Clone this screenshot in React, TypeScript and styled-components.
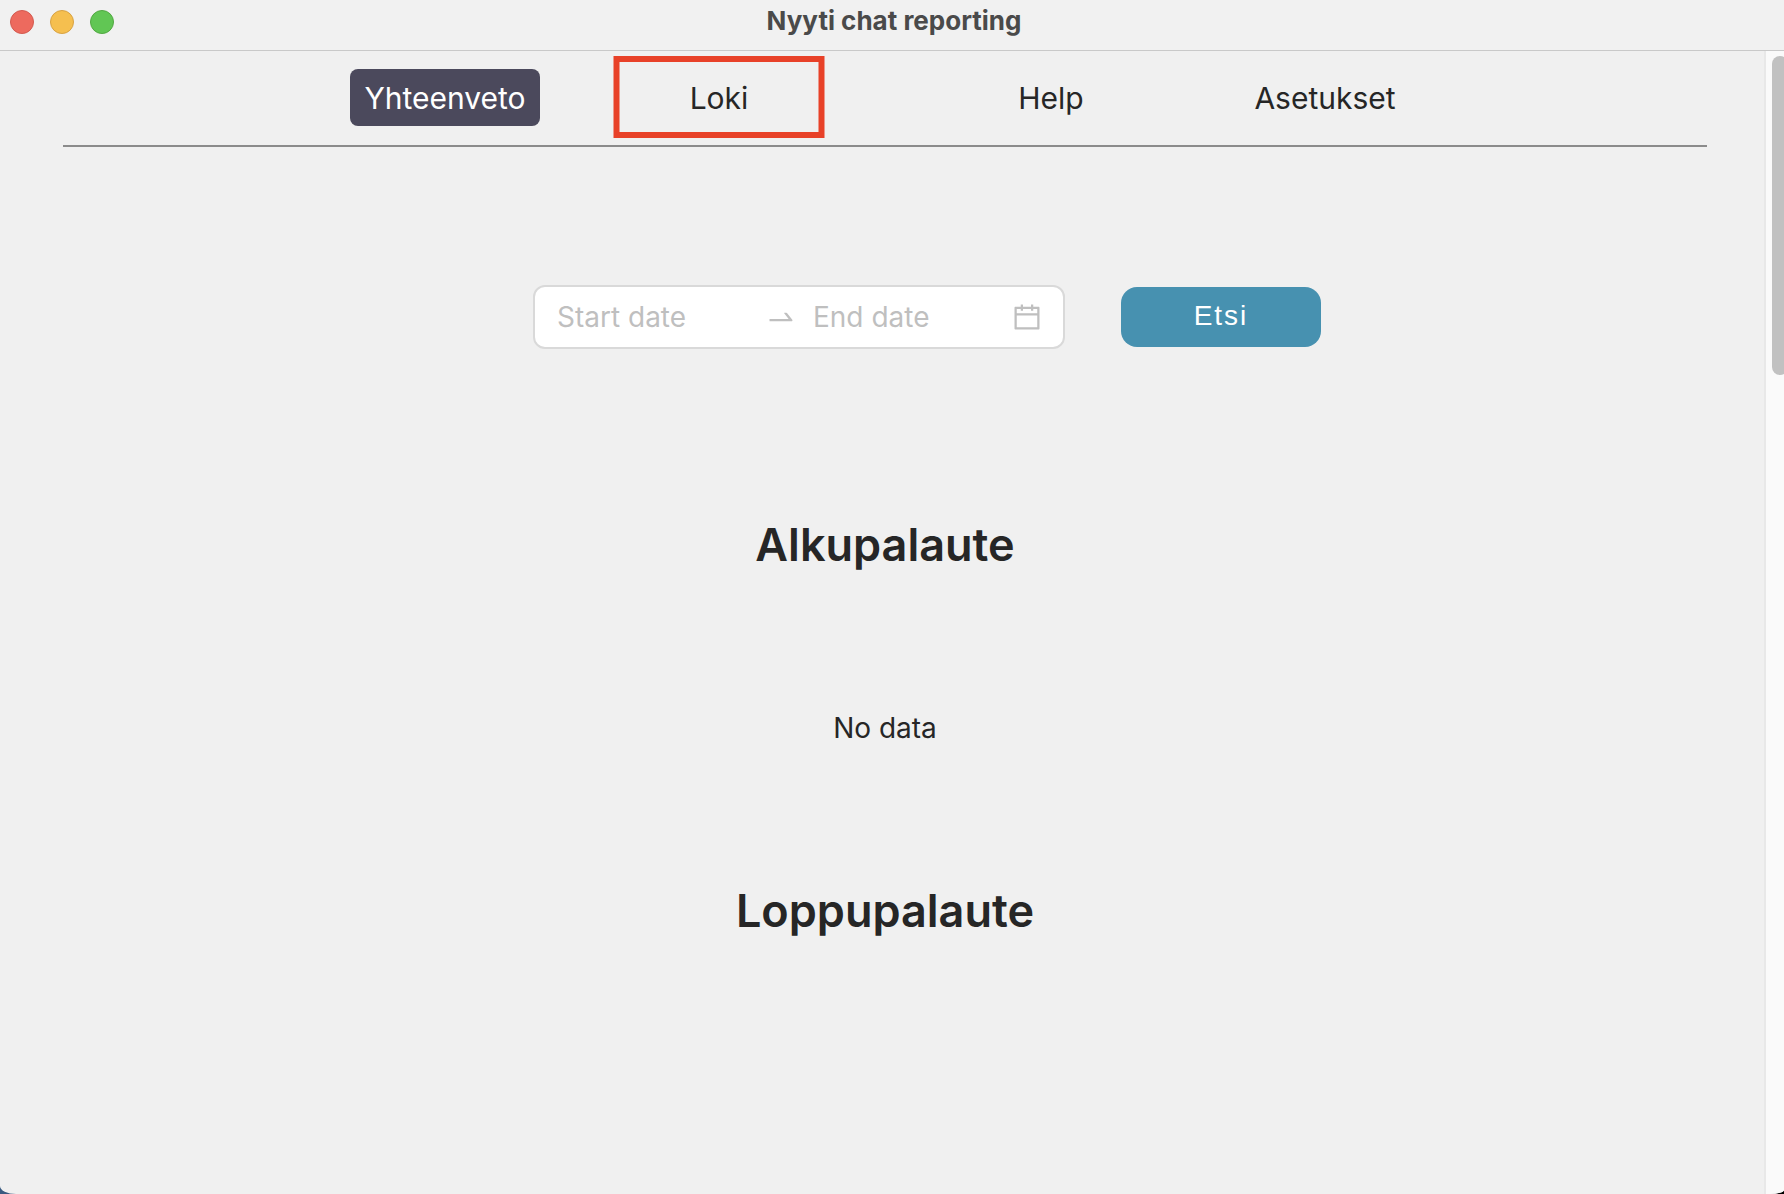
import React from "react";
import styled, { createGlobalStyle } from "styled-components";

const GlobalStyle = createGlobalStyle`
  *, *::before, *::after { box-sizing: border-box; }
  body {
    margin: 0;
    background: linear-gradient(90deg, #3a5a80 50%, #000 50%);
    font-family: Inter, "Liberation Sans", sans-serif;
    color: #262626;
  }
`;

const Window = styled.div`
  display: flex;
  flex-direction: column;
  min-height: 100vh;
  overflow: hidden;
  background: #f0f0f0;
  border-radius: 0 0 14px 16px / 0 0 4px 8px;
`;

const TitleBar = styled.header`
  display: grid;
  grid-template-columns: 1fr auto 1fr;
  align-items: center;
  height: 51px;
  padding: 0 6px 6px 10px;
  background: #f1f1f1;
  border-bottom: 1px solid #c9c9c9;
`;

const WindowControls = styled.div`
  display: flex;
  gap: 16px;
`;

const Light = styled.button<{ $fill: string; $edge: string }>`
  width: 24px;
  height: 24px;
  padding: 0;
  border: 1px solid ${(p) => p.$edge};
  border-radius: 50%;
  background: ${(p) => p.$fill};
`;

const Title = styled.span`
  padding-bottom: 2px;
  font-size: 26px;
  font-weight: 700;
  line-height: 32px;
  color: #4a4a4a;
`;

const Viewport = styled.div`
  display: flex;
  flex: 1;
`;

const Page = styled.div`
  flex: 1;
  min-width: 0;
  padding: 0 57px 0 63px;
`;

const Nav = styled.nav`
  display: flex;
  justify-content: center;
  gap: 58px;
  height: 96px;
  padding-top: 18px;
  border-bottom: 2px solid #8b8b8b;
`;

const NavGroup = styled.div`
  display: grid;
  grid-template-columns: 1fr 1fr;
  flex: 0 0 calc(100% / 3);
  justify-items: center;
  align-items: start;
`;

const NavLink = styled.a<{ $active?: boolean; $marked?: boolean }>`
  position: relative;
  height: 57px;
  padding: 1px 14px 0;
  border-radius: 8px;
  font-size: 30px;
  line-height: 56px;
  text-decoration: none;
  color: ${(p) => (p.$active ? "#fff" : "#262626")};
  background: ${(p) => (p.$active ? "#4b495c" : "transparent")};

  ${(p) =>
    p.$marked &&
    `&::after {
      content: "";
      position: absolute;
      top: -13px;
      left: 50%;
      width: 211px;
      height: 82px;
      transform: translateX(-50%);
      border: 6px solid #e84128;
    }`}
`;

const Search = styled.form`
  display: flex;
  justify-content: center;
  align-items: center;
  gap: 56px;
  margin: 138px 0 33px;
  padding-left: 84px;
`;

const RangePicker = styled.div`
  display: flex;
  align-items: center;
  width: 532px;
  height: 64px;
  padding: 0 20px 0 22px;
  border: 2px solid #d9d9d9;
  border-radius: 12px;
  background: #fff;
`;

const DateInput = styled.input`
  flex: 1;
  min-width: 0;
  padding: 0;
  border: 0;
  outline: 0;
  background: transparent;
  font: 28px/36px Inter, "Liberation Sans", sans-serif;
  color: #262626;

  &::placeholder {
    color: #bfbfbf;
    opacity: 1;
  }
`;

const Icon = styled.svg<{ $gap: number }>`
  flex: none;
  width: 32px;
  height: 32px;
  margin-left: ${(p) => p.$gap}px;
  fill: #bfbfbf;

  & + input {
    margin-left: 16px;
  }
`;

const SearchButton = styled.button`
  width: 200px;
  height: 60px;
  padding: 0 0 2px;
  border: 0;
  border-radius: 16px;
  background: #4791b0;
  color: #fff;
  font: 28px/32px "Liberation Sans", sans-serif;
  letter-spacing: 2px;
`;

const Section = styled.section`
  text-align: center;
`;

const Heading = styled.h1`
  margin: 0;
  padding-top: 131px;
  font-size: 45px;
  font-weight: 600;
  line-height: 64px;
`;

const Empty = styled.p`
  margin: 0;
  padding-top: 131px;
  font-size: 28px;
  line-height: 40px;
`;

const ScrollTrack = styled.div`
  flex: none;
  width: 20px;
  padding: 5px 0 0 6px;
  overflow: hidden;
  border-left: 2px solid #e8e8e8;
  background: #fafafa;
`;

const ScrollThumb = styled.div`
  width: 16px;
  height: 319px;
  border-radius: 8px;
  background: #c1c1c1;
`;

const lights = [
  { label: "Close", fill: "#ed6a5e", edge: "#d35a4f" },
  { label: "Minimize", fill: "#f5bf4f", edge: "#d8a243" },
  { label: "Zoom", fill: "#61c654", edge: "#52a842" },
];

const sections = [
  { title: "Alkupalaute", empty: true },
  { title: "Loppupalaute", empty: false },
];

export default function App() {
  return (
    <>
      <GlobalStyle />
      <Window>
        <TitleBar>
          <WindowControls>
            {lights.map((l) => (
              <Light key={l.label} type="button" aria-label={l.label} $fill={l.fill} $edge={l.edge} />
            ))}
          </WindowControls>
          <Title>Nyyti chat reporting</Title>
        </TitleBar>
        <Viewport>
          <Page>
            <Nav>
              <NavGroup>
                <NavLink href="#yhteenveto" $active aria-current="page">Yhteenveto</NavLink>
                <NavLink href="#loki" $marked>Loki</NavLink>
              </NavGroup>
              <NavGroup>
                <NavLink href="#help">Help</NavLink>
                <NavLink href="#asetukset">Asetukset</NavLink>
              </NavGroup>
            </Nav>
            <main>
              <Search onSubmit={(e) => e.preventDefault()}>
                <RangePicker>
                  <DateInput aria-label="Start date" placeholder="Start date" />
                  <Icon $gap={16} viewBox="0 0 1024 1024" aria-hidden="true">
                    <path d="M873.1 596.2l-164-208A32 32 0 00684 376h-64.8c-6.7 0-10.4 7.7-6.3 13l144.3 183H152c-4.4 0-8 3.6-8 8v60c0 4.4 3.6 8 8 8h695.9c26.8 0 41.7-30.8 25.2-51.8z" />
                  </Icon>
                  <DateInput aria-label="End date" placeholder="End date" />
                  <Icon $gap={6} viewBox="0 0 1024 1024" aria-hidden="true">
                    <path d="M880 184H712v-64c0-4.4-3.6-8-8-8h-56c-4.4 0-8 3.6-8 8v64H384v-64c0-4.4-3.6-8-8-8h-56c-4.4 0-8 3.6-8 8v64H144c-17.7 0-32 14.3-32 32v664c0 17.7 14.3 32 32 32h736c17.7 0 32-14.3 32-32V216c0-17.7-14.3-32-32-32zm-40 656H184V460h656v380zM184 392V256h128v48c0 4.4 3.6 8 8 8h56c4.4 0 8-3.6 8-8v-48h256v48c0 4.4 3.6 8 8 8h56c4.4 0 8-3.6 8-8v-48h128v136H184z" />
                  </Icon>
                </RangePicker>
                <SearchButton type="submit">Etsi</SearchButton>
              </Search>
              {sections.map((s) => (
                <Section key={s.title}>
                  <Heading>{s.title}</Heading>
                  {s.empty && <Empty>No data</Empty>}
                </Section>
              ))}
            </main>
          </Page>
          <ScrollTrack aria-hidden="true">
            <ScrollThumb />
          </ScrollTrack>
        </Viewport>
      </Window>
    </>
  );
}
